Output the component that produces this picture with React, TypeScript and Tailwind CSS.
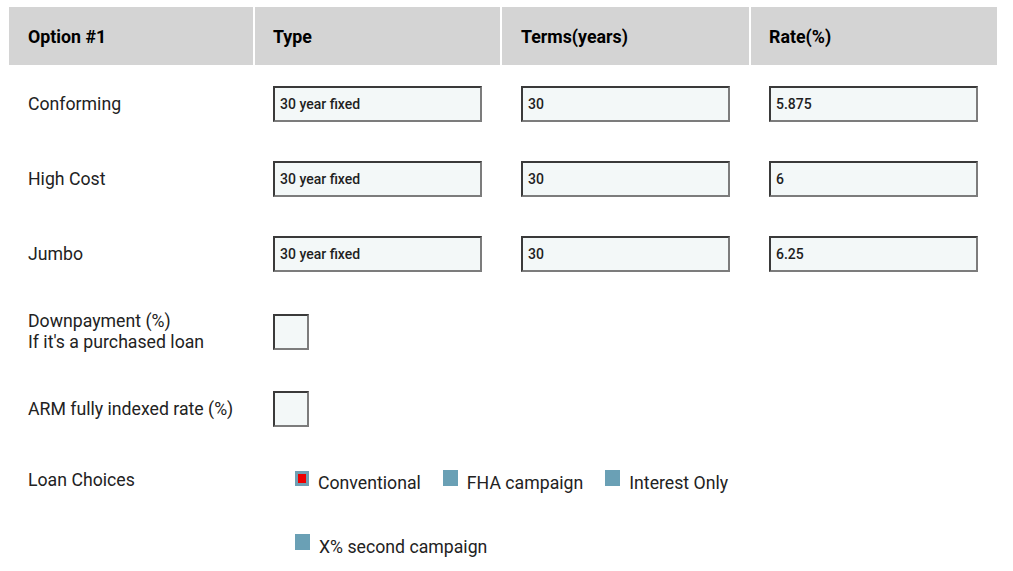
const headers = ['Option #1', 'Type', 'Terms(years)', 'Rate(%)'];

const rows = [
  { label: 'Conforming', type: '30 year fixed', terms: '30', rate: '5.875' },
  { label: 'High Cost', type: '30 year fixed', terms: '30', rate: '6' },
  { label: 'Jumbo', type: '30 year fixed', terms: '30', rate: '6.25' },
];

const font = { fontFamily: 'Roboto, "Noto Sans", sans-serif' };

const Field = ({ value, small }: { value?: string; small?: boolean }) => (
  <div
    className={`${small ? 'w-[36px]' : 'w-[209px]'} h-[36px] flex items-center bg-[#f3f8f8] border-2 border-t-[#3a3a3a] border-l-[#3a3a3a] border-r-[#7c7c7c] border-b-[#7c7c7c] pl-[5px] text-[14px] font-medium text-[#1f1f1f]`}
  >
    {value}
  </div>
);

const Choice = ({ label, checked }: { label: string; checked?: boolean }) => (
  <div className="flex items-start">
    {checked ? (
      <div className="mt-[-1px] w-[14px] h-[15px] bg-[#6f9fb3] p-[3px]">
        <div className="w-full h-full bg-[#ee0000]" />
      </div>
    ) : (
      <div className="mt-[-2px] w-[15px] h-[16px] bg-[#6aa0b5]" />
    )}
    <span className="ml-[9px] text-[17.7px] leading-[22px] text-[#222]">{label}</span>
  </div>
);

export default function App() {
  return (
    <div className="min-h-screen bg-white pt-[7px]" style={font}>
      <div className="ml-[9px] w-[988px]">
        <div className="grid grid-cols-[244px_245px_247px_246px] gap-[2px] h-[58px]">
          {headers.map((h, i) => (
            <div
              key={h}
              className={`bg-[#d4d4d4] flex items-center text-[17.8px] font-bold text-black pt-[2px] ${i === 0 || i === 2 ? 'pl-[19px]' : 'pl-[18px]'}`}
            >
              {h}
            </div>
          ))}
        </div>

        <div className="mt-[21px] flex flex-col gap-[39px]">
          {rows.map((r) => (
            <div key={r.label} className="grid grid-cols-[244px_245px_247px_246px] gap-[2px] items-center">
              <div className="pl-[19px] text-[17.7px] leading-[22px] text-[#222]">{r.label}</div>
              <div className="pl-[18px]"><Field value={r.type} /></div>
              <div className="pl-[19px]"><Field value={r.terms} /></div>
              <div className="pl-[18px]"><Field value={r.rate} /></div>
            </div>
          ))}
        </div>

        <div className="mt-[39px] grid grid-cols-[244px_245px] gap-[2px] items-center">
          <div className="pl-[19px] text-[17.7px] leading-[21px] text-[#222]">
            Downpayment (%)
            <br />
            If it's a purchased loan
          </div>
          <div className="pl-[18px]"><Field small /></div>
        </div>

        <div className="mt-[38px] grid grid-cols-[244px_245px] gap-[2px] items-center">
          <div className="pl-[19px] text-[17.7px] leading-[22px] text-[#222]">ARM fully indexed rate (%)</div>
          <div className="pl-[18px]"><Field small /></div>
        </div>

        <div className="mt-[42px] grid grid-cols-[244px_auto] gap-[2px] items-start">
          <div className="pl-[19px] text-[17.7px] leading-[22px] text-[#222]">Loan Choices</div>
          <div className="pl-[40px] pt-[3px] w-[500px] flex flex-wrap gap-x-[22px] gap-y-[42px]">
            <Choice label="Conventional" checked />
            <Choice label="FHA campaign" />
            <Choice label="Interest Only" />
            <Choice label="X% second campaign" />
          </div>
        </div>
      </div>
    </div>
  );
}
